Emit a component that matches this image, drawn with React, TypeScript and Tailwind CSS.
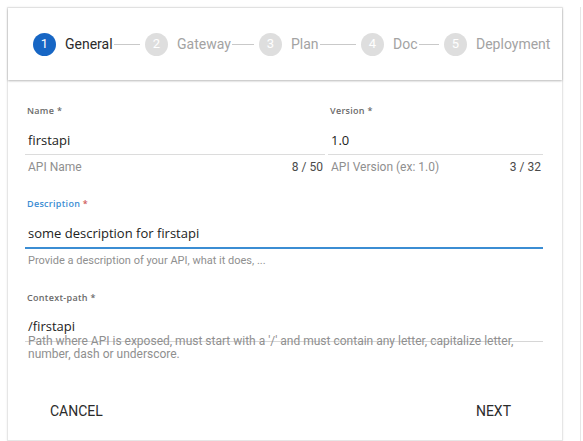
import React from 'react';

const steps = [
  { n: 1, label: 'General', w: 'w-[112px]', active: true },
  { n: 2, label: 'Gateway', w: 'w-[114px]', active: false },
  { n: 3, label: 'Plan', w: 'w-[102px]', active: false },
  { n: 4, label: 'Doc', w: 'w-[83px]', active: false },
];

function Stepper() {
  return (
    <div className="h-[72px] flex items-center pl-[25px] shadow-[0_1px_2px_rgba(0,0,0,0.28)] relative z-10 font-['Roboto',sans-serif]">
      {steps.map(s => (
        <div key={s.n} className={`${s.w} flex items-center`}>
          <div
            className={`w-[23px] h-[23px] rounded-full flex items-center justify-center text-[13px] text-white shrink-0 ${
              s.active ? 'bg-[#1766c4]' : 'bg-[#dedede]'
            }`}
          >
            {s.n}
          </div>
          <span className={`ml-[9px] text-[14px] ${s.active ? 'text-[#2b2b2b] text-[14.5px]' : 'text-[#a3a3a3]'}`}>{s.label}</span>
          <div className="flex-1 h-px bg-[#c9c9c9] ml-[1px] mr-[5px]" />
        </div>
      ))}
      <div className="flex items-center">
        <div className="w-[23px] h-[23px] rounded-full flex items-center justify-center text-[13px] text-white bg-[#dedede]">5</div>
        <span className="ml-[9px] text-[14px] text-[#a3a3a3]">Deployment</span>
      </div>
    </div>
  );
}

function Label({ text, focused }: { text: string; focused?: boolean }) {
  return (
    <div
      className={`h-[12px] leading-[12px] pl-[2px] text-[9px] font-semibold tracking-[0.3px] font-['Open_Sans',sans-serif] ${
        focused ? 'text-[#3b8dd3]' : 'text-[#6a6a6a]'
      }`}
    >
      {text} <span className={focused ? 'text-[#d05a5a]' : ''}>*</span>
    </div>
  );
}

function Value({ text }: { text: string }) {
  return (
    <div className="h-[24px] pl-[3px] text-[13px] leading-[20px] text-[#222] font-['Open_Sans',sans-serif]">{text}</div>
  );
}

function Helper({ text, count }: { text: string; count?: string }) {
  return (
    <div className="mt-[4px] h-[16px] leading-[16px] flex justify-between pl-[3px] pr-[2px] text-[12px] font-['Roboto',sans-serif]">
      <span className="text-[#8f8f8f]">{text}</span>
      {count && <span className="text-[#4a4a4a]">{count}</span>}
    </div>
  );
}

export default function App() {
  return (
    <div className="w-[583px] h-[441px] overflow-hidden bg-white flex pt-[7px] pl-[7px]">
      <div className="w-[556px] shrink-0 border border-[#e6e6e6] shadow-[0_0_2px_rgba(0,0,0,0.08)] bg-white">
        <Stepper />
        <div className="pl-[17px] pr-[19px] pt-[25px]">
          <div className="grid grid-cols-[300px_1fr] gap-x-[3px]">
            <div>
              <Label text="Name" />
              <div className="h-[13px]" />
              <Value text="firstapi" />
              <div className="h-px bg-[#dcdcdc]" />
              <Helper text="API Name" count="8 / 50" />
            </div>
            <div>
              <Label text="Version" />
              <div className="h-[13px]" />
              <Value text="1.0" />
              <div className="h-px bg-[#dcdcdc]" />
              <Helper text="API Version (ex: 1.0)" count="3 / 32" />
            </div>
          </div>

          <div className="mt-[23px]">
            <Label text="Description" focused />
            <div className="h-[13px]" />
            <Value text="some description for firstapi" />
            <div className="h-[2px] bg-[#3b8dd3]" />
            <div className="mt-[4px] h-[16px] leading-[16px] pl-[3px] text-[11px] text-[#8f8f8f] font-['Roboto',sans-serif]">
              Provide a description of your API, what it does, ...
            </div>
          </div>

          <div className="mt-[23px]">
            <Label text="Context-path" />
            <div className="h-[13px]" />
            <div className="h-[20px] pl-[3px] text-[13px] leading-[18px] text-[#222] font-['Open_Sans',sans-serif]">/firstapi</div>
            <div className="mt-[4px] h-px bg-[#d6d6d6]" />
            <div className="-mt-[7px] pl-[3px] text-[12px] leading-[13px] text-[#8f8f8f] font-['Roboto',sans-serif]">
              Path where API is exposed, must start with a '/' and must contain any letter, capitalize letter,
              <br />
              number, dash or underscore.
            </div>
          </div>
        </div>

        <div className="flex justify-between pl-[42px] pr-[51px] mt-[40px] text-[14px] text-[#2b2b2b] font-['Roboto',sans-serif]">
          <span>CANCEL</span>
          <span>NEXT</span>
        </div>
      </div>
      <div className="ml-[17px] flex-1 border-l border-[#e6e6e6] bg-white" />
    </div>
  );
}
